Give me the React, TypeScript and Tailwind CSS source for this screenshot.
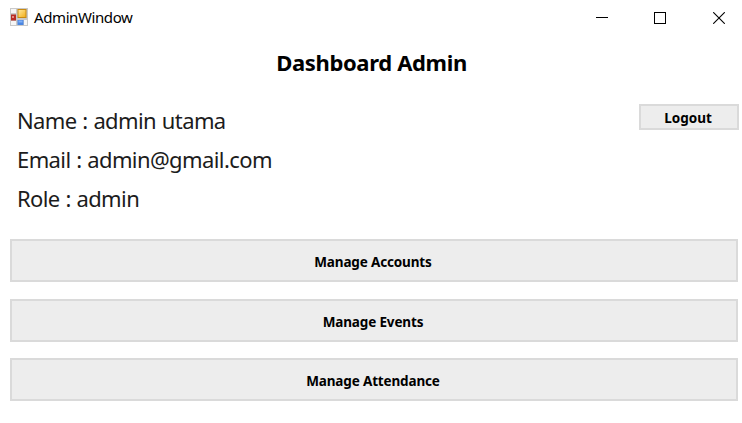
import React from "react";

function AppIcon() {
  return (
    <svg className="h-[18px] w-[18px] shrink-0" viewBox="0 0 18 18">
      <defs>
        <linearGradient id="gold" x1="0" y1="0" x2="1" y2="1">
          <stop offset="0" stopColor="#ffe79a" />
          <stop offset="1" stopColor="#f3b01b" />
        </linearGradient>
      </defs>
      <rect width="18" height="18" fill="#c9c9c9" />
      <path d="M1 1h5v4H1zM1 13h5v4H1zM14 12h3v5h-3z" fill="#f6f6f6" />
      <rect x="1" y="6.5" width="5" height="6" fill="#b72c25" />
      <rect x="2" y="8" width="2" height="2" fill="#e58a80" />
      <rect x="7.5" y="1" width="9" height="9" fill="#c88a12" />
      <rect x="8.5" y="2" width="7" height="7" fill="url(#gold)" />
      <rect x="7.5" y="12" width="6" height="5" fill="#4b86e2" />
      <rect x="8.5" y="12.5" width="4" height="2" fill="#80b0f5" />
    </svg>
  );
}

function TitleBar() {
  return (
    <header className="flex h-[34px] items-center pl-2.5">
      <AppIcon />
      <span className="ml-1.5 text-[15px] leading-[34px] tracking-[-0.4px]">AdminWindow</span>
      <div className="mt-[2px] mr-[17px] ml-auto flex items-center">
        <svg className="mr-[46px] h-3 w-3" viewBox="0 0 12 12" shapeRendering="crispEdges">
          <path d="M0 5.5h12" stroke="#000" />
        </svg>
        <svg className="mr-[47px] h-3 w-3" viewBox="0 0 12 12">
          <rect x=".5" y=".5" width="11" height="11" fill="none" stroke="#000" />
        </svg>
        <svg className="h-3 w-3" viewBox="0 0 12 12">
          <path d="M.2.2l11.6 11.6M11.8.2L.2 11.8" stroke="#000" strokeWidth="1.1" />
        </svg>
      </div>
    </header>
  );
}

function ManageButton({ label }: { label: string }) {
  return (
    <button className="flex h-[43px] w-full items-center justify-center border-2 border-[#dadada] bg-[#ededed] pt-[4px] pr-[2px] text-[13.5px] font-bold tracking-[-0.15px]">
      {label}
    </button>
  );
}

export default function App() {
  return (
    <main className="flex h-[423px] w-[742px] flex-col overflow-hidden bg-white font-['Noto_Sans',sans-serif] text-black">
      <TitleBar />
      <h1 className="mt-3 h-8 pl-px text-center text-[22px] leading-8 font-bold tracking-[-0.35px]">
        Dashboard Admin
      </h1>
      <section className="mt-[23px] flex h-[118px] items-start justify-between pr-[3px] pl-[17px] text-[#1c1c1c]">
        <div className="text-[22px] leading-[39px] tracking-[-0.6px] [word-spacing:0.6px]">
          <p>Name : admin utama</p>
          <p>Email : admin@gmail.com</p>
          <p>Role : admin</p>
        </div>
        <button className="mt-[3px] flex h-[26px] w-[100px] items-center justify-center border-2 border-[#dadada] bg-[#ededed] pt-[2px] pr-[2px] text-[13.5px] font-bold text-black">
          Logout
        </button>
      </section>
      <nav className="mt-5 flex flex-col pr-1 pl-2.5">
        <ManageButton label="Manage Accounts" />
        <div className="h-[17px]" />
        <ManageButton label="Manage Events" />
        <div className="h-4" />
        <ManageButton label="Manage Attendance" />
      </nav>
    </main>
  );
}
